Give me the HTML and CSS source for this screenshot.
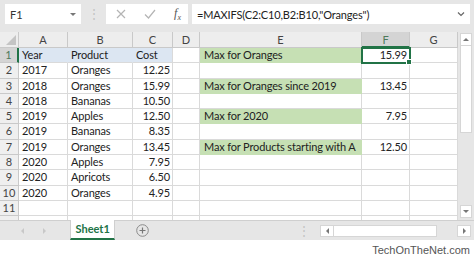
FILE: index.html
```html
<!DOCTYPE html>
<html lang="en">
<head>
    <meta charset="UTF-8">
    <title>MAXIFS - Excel</title>
    <link rel="stylesheet" href="styles.css">
</head>
<body>
<div class="app">

    <!-- name box + formula bar -->
    <div class="formula-bar">
        <div class="name-box"><span>F1</span><span class="caret"></span></div>
        <div class="grip">&#8942;</div>
        <div class="fx-box">
            <svg width="10" height="10" viewBox="0 0 10 10"><path d="M1 1L9 9M9 1L1 9" stroke="#b4b4b4" stroke-width="1.2" fill="none"/></svg>
            <svg width="12" height="10" viewBox="0 0 12 10"><path d="M1 5.5L4.5 9L11 1" stroke="#b4b4b4" stroke-width="1.2" fill="none"/></svg>
            <span class="fx">f<sub>x</sub></span>
        </div>
        <div class="formula">
            <span>=MAXIFS(C2:C10,B2:B10,"Oranges")</span>
            <svg width="8" height="6" viewBox="0 0 8 6"><path d="M1 1.5L4 4.5L7 1.5" stroke="#666" stroke-width="1.2" fill="none"/></svg>
        </div>
    </div>

    <div class="sheet">
        <div class="grid">
            <div class="row head">
                <div class="corner"><span class="tri"></span></div>
                <div>A</div><div>B</div><div>C</div><div>D</div><div>E</div><div class="on">F</div><div>G</div>
            </div>
            <div class="row">
                <div class="rh on">1</div><div class="blue">Year</div><div class="blue">Product</div><div class="blue">Cost</div><div></div>
                <div class="green">Max for Oranges</div><div class="num active">15.99</div><div></div>
            </div>
            <div class="row">
                <div class="rh">2</div><div>2017</div><div>Oranges</div><div class="num">12.25</div><div></div><div></div><div></div><div></div>
            </div>
            <div class="row">
                <div class="rh">3</div><div>2018</div><div>Oranges</div><div class="num">15.99</div><div></div>
                <div class="green">Max for Oranges since 2019</div><div class="num">13.45</div><div></div>
            </div>
            <div class="row">
                <div class="rh">4</div><div>2018</div><div>Bananas</div><div class="num">10.50</div><div></div><div></div><div></div><div></div>
            </div>
            <div class="row">
                <div class="rh">5</div><div>2019</div><div>Apples</div><div class="num">12.50</div><div></div>
                <div class="green">Max for 2020</div><div class="num">7.95</div><div></div>
            </div>
            <div class="row">
                <div class="rh">6</div><div>2019</div><div>Bananas</div><div class="num">8.35</div><div></div><div></div><div></div><div></div>
            </div>
            <div class="row">
                <div class="rh">7</div><div>2019</div><div>Oranges</div><div class="num">13.45</div><div></div>
                <div class="green">Max for Products starting with A</div><div class="num">12.50</div><div></div>
            </div>
            <div class="row">
                <div class="rh">8</div><div>2020</div><div>Apples</div><div class="num">7.95</div><div></div><div></div><div></div><div></div>
            </div>
            <div class="row">
                <div class="rh">9</div><div>2020</div><div>Apricots</div><div class="num">6.50</div><div></div><div></div><div></div><div></div>
            </div>
            <div class="row">
                <div class="rh">10</div><div>2020</div><div>Oranges</div><div class="num">4.95</div><div></div><div></div><div></div><div></div>
            </div>
            <div class="row">
                <div class="rh">11</div><div></div><div></div><div></div><div></div><div></div><div></div><div></div>
            </div>
            <div class="row">
                <div class="rh"></div><div></div><div></div><div></div><div></div><div></div><div></div><div></div>
            </div>
        </div>

        <div class="vscroll">
            <div class="sbtn"><span class="arr up"></span></div>
            <div class="vthumb"></div>
            <div class="vtrack"></div>
            <div class="sbtn"><span class="arr down"></span></div>
        </div>
    </div>

    <!-- sheet tabs + horizontal scrollbar -->
    <div class="tabs">
        <div class="tab-nav"><span class="arr left faint"></span><span class="arr right faint"></span></div>
        <div class="tab">Sheet1</div>
        <div class="add">
            <svg width="13" height="13" viewBox="0 0 13 13"><circle cx="6.5" cy="6.5" r="5.8" stroke="#8a8a8a" stroke-width="1" fill="none"/><path d="M6.5 3.5V9.5M3.5 6.5H9.5" stroke="#777" stroke-width="1.2"/></svg>
        </div>
        <div class="hgrip">&#8942;</div>
        <div class="hscroll">
            <div class="sbtn"><span class="arr left"></span></div>
            <div class="hthumb"></div>
            <div class="htrack"></div>
            <div class="sbtn"><span class="arr right"></span></div>
        </div>
    </div>

    <div class="footer">TechOnTheNet.com</div>
</div>
</body>
</html>
```

FILE: styles.css
```css
body {
    margin: 0;
    background-color: #ffffff;
    font-family: Lato, "Liberation Sans", sans-serif;
    color: #222;
}
.app {
    width: 474px;
}

/* formula bar */
.formula-bar {
    height: 32px;
    box-sizing: border-box;
    padding-top: 4px;
    background-color: #e6e6e6;
    display: flex;
    align-items: flex-start;
}
.name-box {
    margin-left: 5px;
    width: 76px;
    height: 20px;
    box-sizing: border-box;
    padding: 0 5px 0 5px;
    background-color: #fff;
    display: flex;
    align-items: center;
    justify-content: space-between;
    font-size: 11px;
    color: #333;
}
.caret {
    width: 0;
    height: 0;
    border-left: 3px solid transparent;
    border-right: 3px solid transparent;
    border-top: 3px solid #777;
}
.grip {
    width: 25px;
    height: 20px;
    line-height: 20px;
    text-align: center;
    color: #c2c2c2;
    font-size: 12px;
}
.fx-box {
    width: 82px;
    height: 20px;
    background-color: #fff;
    display: flex;
    align-items: center;
    justify-content: space-between;
    padding: 0 7px 0 10px;
    box-sizing: border-box;
}
.fx {
    font-family: "Liberation Serif", serif;
    font-style: italic;
    font-size: 12px;
    color: #555;
}
.fx sub {
    font-size: 8px;
}
.formula {
    margin-left: 4px;
    width: 278px;
    height: 20px;
    box-sizing: border-box;
    padding: 0 5px;
    background-color: #fff;
    display: flex;
    align-items: center;
    justify-content: space-between;
    font-size: 11px;
    letter-spacing: -0.15px;
    color: #222;
}

/* grid */
.sheet {
    display: flex;
    height: 188px;
    overflow: hidden;
}
.grid {
    width: 458px;
}
.row {
    display: grid;
    grid-template-columns: 19px 49px 65px 40px 27px 162px 48px 48px;
    height: 15.3px;
    font-size: 11px;
    letter-spacing: -0.15px;
}
.row > div {
    box-sizing: border-box;
    border-right: 1px solid #dadada;
    border-bottom: 1px solid #dadada;
    padding: 0 3px;
    line-height: 14px;
    white-space: nowrap;
    overflow: hidden;
}
.row.head {
    height: 16px;
    letter-spacing: 0;
}
.row.head > div {
    background-color: #ededed;
    border-color: #c9c9c9;
    color: #444;
    text-align: center;
    line-height: 15px;
}
.row.head > .on {
    background-color: #d4d4d4;
    color: #4d7a5b;
    border-bottom: 2px solid #217346;
}
.corner {
    position: relative;
}
.tri {
    position: absolute;
    right: 2px;
    bottom: 2px;
    width: 0;
    height: 0;
    border-left: 10px solid transparent;
    border-bottom: 10px solid #c4c4c4;
}
.row > .rh {
    padding: 0;
    background-color: #efefef;
    border-color: #c9c9c9;
    color: #444;
    text-align: center;
    letter-spacing: 0;
}
.row > .rh.on {
    background-color: #d4d4d4;
    color: #4d7a5b;
    border-right: 2px solid #217346;
}
.row > .num {
    text-align: right;
    padding-right: 2px;
}
.row > .blue {
    background-color: #dce6f2;
    border-right-color: #dce6f2;
}
.row > .blue:nth-child(4) {
    border-right-color: #dadada;
}
.row > .green {
    background-color: #c6e0b4;
    border-right-color: #c6e0b4;
    border-bottom-color: #c6e0b4;
    padding-left: 4px;
}
.row > .active {
    position: relative;
    outline: 2px solid #217346;
    outline-offset: -1px;
    z-index: 1;
    overflow: visible;
}
.active::after {
    content: "";
    position: absolute;
    right: -3px;
    bottom: -3px;
    width: 4px;
    height: 4px;
    background-color: #217346;
    border: 1px solid #fff;
}

/* scrollbars */
.vscroll {
    width: 16px;
    box-sizing: border-box;
    padding: 1px 2px 2px 2px;
    background-color: #e6e6e6;
    display: flex;
    flex-direction: column;
}
.sbtn {
    background-color: #fff;
    border: 1px solid #d6d6d6;
    display: flex;
    align-items: center;
    justify-content: center;
}
.vscroll .sbtn {
    height: 11px;
}
.vthumb {
    height: 86px;
    background-color: #fff;
    border: 1px solid #d6d6d6;
    border-top: none;
}
.vtrack {
    flex: 1;
}
.arr {
    width: 0;
    height: 0;
}
.arr.up {
    border-left: 3px solid transparent;
    border-right: 3px solid transparent;
    border-bottom: 3px solid #777;
}
.arr.down {
    border-left: 3px solid transparent;
    border-right: 3px solid transparent;
    border-top: 3px solid #777;
}
.arr.left {
    border-top: 3px solid transparent;
    border-bottom: 3px solid transparent;
    border-right: 3px solid #777;
}
.arr.right {
    border-top: 3px solid transparent;
    border-bottom: 3px solid transparent;
    border-left: 3px solid #777;
}
.arr.left.faint {
    border-right-color: #c8c8c8;
}
.arr.right.faint {
    border-left-color: #c8c8c8;
}

/* tabs */
.tabs {
    height: 20px;
    box-sizing: border-box;
    background-color: #e6e6e6;
    border-top: 1px solid #cfcfcf;
    display: flex;
}
.tab-nav {
    width: 77px;
    box-sizing: border-box;
    padding-left: 21px;
    display: flex;
    align-items: center;
    gap: 19px;
}
.tab {
    width: 50px;
    box-sizing: border-box;
    margin-top: -1px;
    background-color: #fff;
    border-left: 1px solid #cfcfcf;
    border-right: 1px solid #cfcfcf;
    border-bottom: 2px solid #217346;
    color: #217346;
    font-weight: bold;
    font-size: 11px;
    text-align: center;
    line-height: 18px;
}
.add {
    width: 62px;
    display: flex;
    align-items: center;
    justify-content: center;
}
.hgrip {
    width: 169px;
    box-sizing: border-box;
    padding-right: 10px;
    text-align: right;
    color: #c2c2c2;
    font-size: 12px;
    line-height: 19px;
}
.hscroll {
    width: 174px;
    box-sizing: border-box;
    padding: 4px 3px 3px 0;
    display: flex;
}
.hscroll .sbtn {
    width: 12px;
}
.hthumb {
    width: 102px;
    background-color: #fff;
    border: 1px solid #d6d6d6;
    border-left: none;
}
.htrack {
    flex: 1;
}

.footer {
    height: 21px;
    padding-right: 4px;
    text-align: right;
    font-family: "Liberation Sans", Arial, sans-serif;
    font-size: 11px;
    line-height: 21px;
    color: #555;
}
```
